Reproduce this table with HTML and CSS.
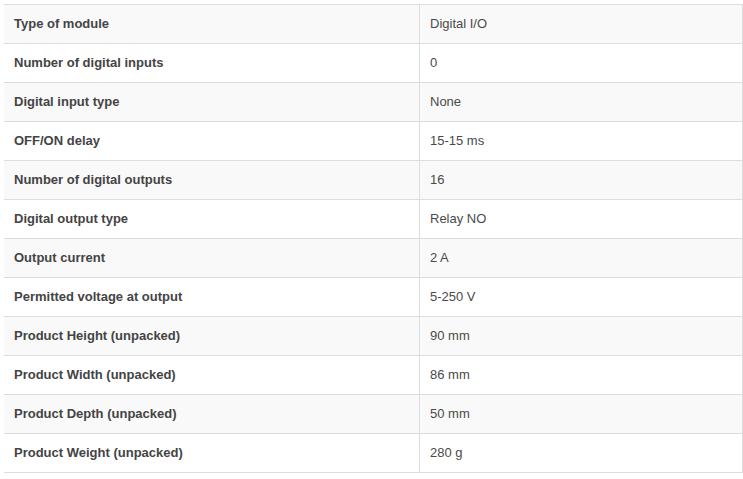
FILE: index.html
```html
<!DOCTYPE html>
<html>
<head>
<meta charset="utf-8">
<link rel="stylesheet" href="styles.css">
</head>
<body>
<table class="specs">
<tbody>
<tr><th>Type of module</th><td>Digital I/O</td></tr>
<tr><th>Number of digital inputs</th><td>0</td></tr>
<tr><th>Digital input type</th><td>None</td></tr>
<tr><th>OFF/ON delay</th><td>15-15 ms</td></tr>
<tr><th>Number of digital outputs</th><td>16</td></tr>
<tr><th>Digital output type</th><td>Relay NO</td></tr>
<tr><th>Output current</th><td>2 A</td></tr>
<tr><th>Permitted voltage at output</th><td>5-250 V</td></tr>
<tr><th>Product Height (unpacked)</th><td>90 mm</td></tr>
<tr><th>Product Width (unpacked)</th><td>86 mm</td></tr>
<tr><th>Product Depth (unpacked)</th><td>50 mm</td></tr>
<tr><th>Product Weight (unpacked)</th><td>280 g</td></tr>
</tbody>
</table>
</body>
</html>
```
FILE: styles.css
```css
html, body {
  margin: 0;
  padding: 0;
  background: #fff;
}
body {
  padding: 4px 0 0 4px;
  font-family: "Liberation Sans", Arial, sans-serif;
  font-size: 13px;
  color: #444;
}
.specs {
  width: 739px;
  border-collapse: collapse;
  border-top: 1px solid #ddd;
  border-right: 1px solid #ddd;
}
.specs th,
.specs td {
  padding: 12px 10px;
  line-height: 14px;
  height: 14px;
  text-align: left;
  vertical-align: middle;
  border-bottom: 1px solid #ddd;
}
.specs th {
  width: 395px;
  font-weight: bold;
  color: #444;
  border-right: 1px solid #ddd;
}
.specs td {
  font-weight: normal;
  color: #4a4a4a;
}
.specs tr:nth-child(odd) {
  background: #f9f9f9;
}
```
